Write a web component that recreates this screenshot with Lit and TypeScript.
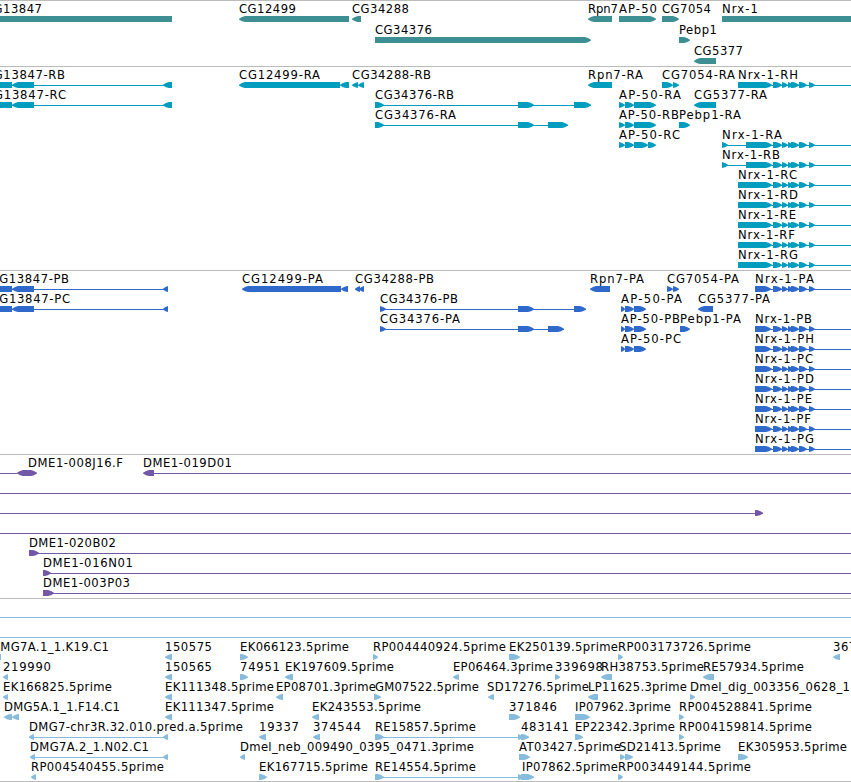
import { LitElement, html, svg, css } from 'lit';
import { customElement, property } from 'lit/decorators.js';

// label: text, left edge, right edge
type Label = [string, number, number];
// block: start, end, arrow direction ('<', '>', '<>' or none)
type Block = [number, number, string?];

interface Row {
  labels?: Label[];
  blocks?: Block[];
  lines?: [number, number][];
}

interface Track {
  name: string;
  color: string;
  rowHeight: number;
  rows: Row[];
}

const WIDTH = 851;

const nrxTail: Block[] = [
  [773, 782, '>'], [782, 788, '>'], [788, 793, '>'],
  [791, 799, '>'], [799, 807, '>'], [809, 815, '>'],
];

const nrxRow = (label: string, start: number, end: number): Row => ({
  labels: [[label, start, end]],
  blocks: [[start, 772, '>'], ...nrxTail],
  lines: [[start, WIDTH]],
});

const nrxLongRow = (label: string, end: number): Row => ({
  labels: [[label, 722, end]],
  blocks: [[722, 728, '>'], [746, 772, '>'], ...nrxTail],
  lines: [[722, WIDTH]],
});

const ap50: Block[] = [[619, 625, '>'], [625, 634, '>'], [634, 656, '>']];
const ap50p: Block[] = [[621, 625, '>'], [625, 634, '>'], [634, 646, '>']];

const tracks: Track[] = [
  {
    name: 'genes',
    color: '#3e8f94',
    rowHeight: 21,
    rows: [
      {
        labels: [
          ['CG13847', -15, 42], ['CG12499', 239, 296], ['CG34288', 352, 409],
          ['Rpn7', 588, 618], ['AP-50', 619, 657], ['CG7054', 662, 711], ['Nrx-1', 722, 758],
        ],
        blocks: [
          [-5, 172], [239, 349, '<'], [352, 361, '<'], [588, 612, '<'],
          [619, 656, '>'], [662, 679, '>'], [722, WIDTH + 5],
        ],
      },
      {
        labels: [['CG34376', 375, 432], ['Pebp1', 679, 717]],
        blocks: [[375, 591, '>'], [679, 690, '>']],
      },
      { labels: [['CG5377', 694, 743]], blocks: [[694, 716, '<']] },
    ],
  },
  {
    name: 'transcripts',
    color: '#009dbf',
    rowHeight: 20,
    rows: [
      {
        labels: [
          ['CG13847-RB', -15, 65], ['CG12499-RA', 239, 320], ['CG34288-RB', 352, 431],
          ['Rpn7-RA', 588, 643], ['CG7054-RA', 662, 735], ['Nrx-1-RH', 738, 798],
        ],
        blocks: [
          [-5, 12], [12, 34, '<'], [163, 172, '<'], [239, 340, '<'], [340, 349, '<'],
          [352, 358, '<'], [358, 364, '<'], [588, 612, '<'],
          [662, 673, '>'], [673, 679, '>'], [738, 772, '>'], ...nrxTail,
        ],
        lines: [[12, 172], [738, WIDTH]],
      },
      {
        labels: [
          ['CG13847-RC', -15, 66], ['CG34376-RB', 375, 454],
          ['AP-50-RA', 619, 681], ['CG5377-RA', 694, 767],
        ],
        blocks: [
          [-5, 12], [12, 34, '<'], [163, 172, '<'],
          [375, 384, '>'], [518, 534, '>'], [574, 591, '>'], ...ap50, [694, 716, '<'],
        ],
        lines: [[12, 172], [375, 591]],
      },
      {
        labels: [['CG34376-RA', 375, 456], ['AP-50-RB', 619, 679], ['Pebp1-RA', 679, 741]],
        blocks: [[375, 384, '>'], [518, 534, '>'], [548, 568, '>'], ...ap50, [679, 690, '>']],
        lines: [[375, 568]],
      },
      {
        labels: [['AP-50-RC', 619, 680], ['Nrx-1-RA', 722, 782]],
        blocks: [
          [619, 625, '>'], [625, 634, '>'], [634, 648, '>'], [648, 656, '>'],
          [722, 728, '>'], [746, 772, '>'], ...nrxTail,
        ],
        lines: [[722, WIDTH]],
      },
      nrxLongRow('Nrx-1-RB', 780),
      nrxRow('Nrx-1-RC', 738, 797),
      nrxRow('Nrx-1-RD', 738, 798),
      nrxRow('Nrx-1-RE', 738, 796),
      nrxRow('Nrx-1-RF', 738, 795),
      nrxRow('Nrx-1-RG', 738, 798),
    ],
  },
  {
    name: 'proteins',
    color: '#3069cc',
    rowHeight: 20,
    rows: [
      {
        labels: [
          ['CG13847-PB', -9.5, 69], ['CG12499-PA', 242, 323], ['CG34288-PB', 355, 434],
          ['Rpn7-PA', 590, 644], ['CG7054-PA', 667, 739], ['Nrx-1-PA', 755, 814],
        ],
        blocks: [
          [-5, 12], [12, 34, '<'], [163, 168, '<'], [242, 341, '<'], [341, 348, '<'],
          [355, 360, '<'], [359, 364, '<'], [590, 610, '<'],
          [667, 673, '>'], [673, 679, '>'], [755, 771, '>'], ...nrxTail,
        ],
        lines: [[12, 168], [755, WIDTH]],
      },
      {
        labels: [
          ['CG13847-PC', -9.5, 70], ['CG34376-PB', 380, 458],
          ['AP-50-PA', 621, 682], ['CG5377-PA', 698, 770],
        ],
        blocks: [
          [-5, 12], [12, 34, '<'], [163, 168, '<'],
          [380, 386, '>'], [518, 534, '>'], [574, 586, '>'], ...ap50p, [698, 713, '<'],
        ],
        lines: [[12, 168], [380, 586]],
      },
      {
        labels: [
          ['CG34376-PA', 380, 460], ['AP-50-PB', 621, 680],
          ['Pebp1-PA', 680, 741], ['Nrx-1-PB', 755, 812],
        ],
        blocks: [
          [380, 386, '>'], [518, 534, '>'], [548, 564, '>'], ...ap50p, [680, 690, '>'],
          [755, 771, '>'], ...nrxTail,
        ],
        lines: [[380, 564], [755, WIDTH]],
      },
      {
        labels: [['AP-50-PC', 621, 681], ['Nrx-1-PH', 755, 814]],
        blocks: [...ap50p, [755, 771, '>'], ...nrxTail],
        lines: [[755, WIDTH]],
      },
      nrxRow('Nrx-1-PC', 755, 813),
      nrxRow('Nrx-1-PD', 755, 814),
      nrxRow('Nrx-1-PE', 755, 812),
      nrxRow('Nrx-1-PF', 755, 811),
      nrxRow('Nrx-1-PG', 755, 814),
    ],
  },
  {
    name: 'bacs',
    color: '#7458a8',
    rowHeight: 20,
    rows: [
      {
        labels: [['DME1-008J16.F', 28, 123], ['DME1-019D01', 143, 232]],
        blocks: [[17, 37, '<>'], [143, 154, '<']],
        lines: [[0, 17], [154, WIDTH]],
      },
      { lines: [[0, WIDTH]] },
      { blocks: [[755, 763, '>']], lines: [[0, 763]] },
      { lines: [[0, WIDTH]] },
      { labels: [['DME1-020B02', 29, 116]], blocks: [[29, 39, '>']], lines: [[29, WIDTH]] },
      { labels: [['DME1-016N01', 43, 133]], blocks: [[43, 51, '>']], lines: [[43, WIDTH]] },
      { labels: [['DME1-003P03', 43, 130]], blocks: [[43, 54, '>']], lines: [[43, WIDTH]] },
    ],
  },
  {
    name: 'ests',
    color: '#87bcdc',
    rowHeight: 20,
    rows: [
      { lines: [[0, WIDTH]] },
      { lines: [[0, WIDTH]] },
      {
        labels: [
          ['DMG7A.1_1.K19.C1', -9, 109], ['150575', 165, 212], ['EK066123.5prime', 240, 349],
          ['RP004440924.5prime', 373, 506], ['EK250139.5prime', 509, 618],
          ['RP003173726.5prime', 618, 751], ['367142', 833, 880],
        ],
        blocks: [
          [-5, 1], [165, 172, '<'], [240, 248, '>'], [373, 378, '>'],
          [509, 520, '>'], [618, 623, '>'], [833, 840, '<'],
        ],
      },
      {
        labels: [
          ['219990', 3, 51], ['150565', 165, 212], ['74951', 240, 280],
          ['EK197609.5prime', 285, 394], ['EP06464.3prime', 453, 553], ['339698', 555, 603],
          ['RH38753.5prime', 601, 704], ['RE57934.5prime', 703, 804],
        ],
        blocks: [
          [3, 8, '<'], [165, 172, '<'], [240, 248, '>'], [285, 293, '<'],
          [453, 459, '<'], [555, 560, '>'], [601, 612, '<'], [703, 714, '<'],
        ],
      },
      {
        labels: [
          ['EK166825.5prime', 3, 112], ['EK111348.5prime', 165, 274],
          ['EP08701.3prime', 276, 376], ['GM07522.5prime', 375, 479],
          ['SD17276.5prime', 487, 589], ['LP11625.3prime', 588, 687],
          ['Dmel_dig_003356_0628_1', 690, 850],
        ],
        blocks: [
          [3, 8, '<'], [165, 172, '<'], [276, 283, '<'], [374, 381, '>'],
          [488, 494, '<'], [588, 598, '<'], [690, 695, '>'],
        ],
      },
      {
        labels: [
          ['DMG5A.1_1.F14.C1', 4, 120], ['EK111347.5prime', 165, 274],
          ['EK243553.5prime', 312, 421], ['371846', 509, 557],
          ['IP07962.3prime', 575, 671], ['RP004528841.5prime', 679, 812],
        ],
        blocks: [
          [4, 12, '<'], [12, 19, '<'], [165, 172, '<'], [312, 319, '<'],
          [509, 520, '>'], [575, 590, '>'], [679, 684, '>'],
        ],
      },
      {
        labels: [
          ['DMG7-chr3R.32.010.pred.a.5prime', 29, 243], ['19337', 259, 299],
          ['374544', 313, 361], ['RE15857.5prime', 375, 476], ['483141', 521, 569],
          ['EP22342.3prime', 575, 675], ['RP004159814.5prime', 679, 812],
        ],
        blocks: [
          [29, 34, '<'], [163, 168, '<'], [259, 266, '<'], [313, 320, '<'],
          [375, 384, '>'], [518, 523, '>'], [521, 529, '>'], [575, 583, '>'], [679, 684, '>'],
        ],
        lines: [[29, 168], [375, 529]],
      },
      {
        labels: [
          ['DMG7A.2_1.N02.C1', 30, 149], ['Dmel_neb_009490_0395_0471.3prime', 240, 474],
          ['AT03427.5prime', 519, 621], ['SD21413.5prime', 619, 721],
          ['EK305953.5prime', 738, 847],
        ],
        blocks: [
          [30, 35, '<'], [163, 168, '<'], [240, 245, '<'], [519, 530, '>'],
          [620, 625, '>'], [625, 633, '>'], [738, 748, '>'],
        ],
        lines: [[30, 168]],
      },
      {
        labels: [
          ['RP004540455.5prime', 31, 164], ['EK167715.5prime', 259, 368],
          ['RE14554.5prime', 375, 476], ['IP07862.5prime', 522, 618],
          ['RP003449144.5prime', 618, 751],
        ],
        blocks: [
          [31, 36, '<'], [259, 267, '>'], [375, 384, '>'],
          [518, 523, '>'], [521, 534, '>'], [618, 623, '>'],
        ],
        lines: [[375, 534]],
      },
    ],
  },
];

@customElement('genome-track')
export class GenomeTrack extends LitElement {
  @property({ attribute: false }) track!: Track;

  static styles = css`
    :host {
      display: flex;
      flex-direction: column;
      border-top: 1px solid #bbb;
    }

    .row {
      display: block;
      overflow: visible;
      flex: none;
    }

    .label {
      font-family: 'DejaVu Sans', sans-serif;
      font-size: 11.6px;
      fill: #000;
    }
  `;

  // bar with slightly bulging arrow heads on the directed ends
  private block([start, end, dir = '']: Block) {
    const head = Math.min(6, end - start);
    const mid = head / 2;
    const left = dir.includes('<')
      ? [[start + head, 21], [start + mid, 20.3], [start, 18.5], [start, 17.8], [start + mid, 16], [start + head, 15]]
      : [[start, 21], [start, 15]];
    const right = dir.includes('>')
      ? [[end - head, 15], [end - mid, 16], [end, 17.8], [end, 18.5], [end - mid, 20.3], [end - head, 21]]
      : [[end, 15], [end, 21]];
    const points = [...left, ...right];
    return svg`<polygon points=${points.map((p) => p.join(',')).join(' ')}></polygon>`;
  }

  private row({ labels = [], blocks = [], lines = [] }: Row) {
    const { color, rowHeight } = this.track;
    return html`
      <svg class="row" width=${WIDTH} height=${rowHeight} fill=${color}>
        ${lines.map(([a, b]) => svg`<rect x=${a} y="18" width=${b - a} height="1"></rect>`)}
        ${blocks.map((b) => this.block(b))}
        ${labels.map(([text, a, b]) => svg`
          <text class="label" x=${a} y="12" textLength=${b - a}>${text}</text>
        `)}
      </svg>
    `;
  }

  render() {
    return this.track.rows.map((r) => this.row(r));
  }
}

@customElement('app-root')
export class AppRoot extends LitElement {
  static styles = css`
    :host {
      display: block;
      box-sizing: border-box;
      width: 851px;
      height: 782px;
      overflow: hidden;
      background: #fff;
      border-bottom: 1px solid #bbb;
    }

    genome-track {
      padding-bottom: 3px;
    }

    .genes {
      padding-bottom: 2px;
    }
  `;

  render() {
    return tracks.map((t) => html`<genome-track class=${t.name} .track=${t}></genome-track>`);
  }
}
